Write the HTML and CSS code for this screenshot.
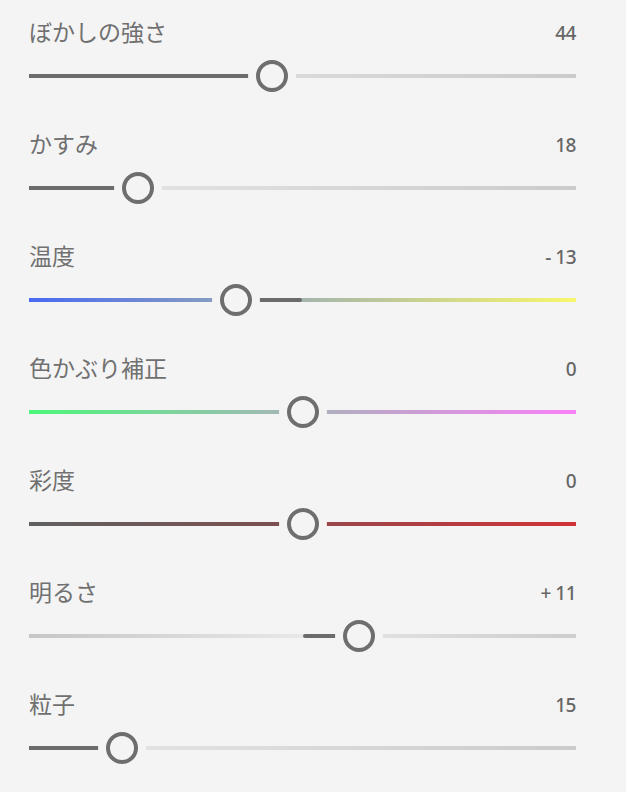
FILE: index.html
```html
<!DOCTYPE html>
<html lang="ja">

<head>
  <meta charset="utf-8">
  <title>調整</title>
  <link rel="stylesheet" href="styles.css">
</head>

<body class="main">
  <div class="panel">
    <div class="row">
      <div class="head"><span class="label">ぼかしの強さ</span><span class="value">44</span></div>
      <div class="slider plain" style="--pos:0.44">
        <div class="track"></div>
        <div class="fill"></div>
        <div class="thumb"></div>
      </div>
    </div>

    <div class="row">
      <div class="head"><span class="label">かすみ</span><span class="value">18</span></div>
      <div class="slider plain" style="--pos:0.18">
        <div class="track"></div>
        <div class="fill"></div>
        <div class="thumb"></div>
      </div>
    </div>

    <div class="row">
      <div class="head"><span class="label">温度</span><span class="value">- 13</span></div>
      <div class="slider center temp" style="--pos:0.37">
        <div class="track"></div>
        <div class="fill"></div>
        <div class="thumb"></div>
      </div>
    </div>

    <div class="row">
      <div class="head"><span class="label">色かぶり補正</span><span class="value">0</span></div>
      <div class="slider center tint" style="--pos:0.5">
        <div class="track"></div>
        <div class="fill"></div>
        <div class="thumb"></div>
      </div>
    </div>

    <div class="row">
      <div class="head"><span class="label">彩度</span><span class="value">0</span></div>
      <div class="slider center sat" style="--pos:0.5">
        <div class="track"></div>
        <div class="fill"></div>
        <div class="thumb"></div>
      </div>
    </div>

    <div class="row">
      <div class="head"><span class="label">明るさ</span><span class="value">+ 11</span></div>
      <div class="slider center bright" style="--pos:0.61">
        <div class="track"></div>
        <div class="fill"></div>
        <div class="thumb"></div>
      </div>
    </div>

    <div class="row">
      <div class="head"><span class="label">粒子</span><span class="value">15</span></div>
      <div class="slider plain" style="--pos:0.15">
        <div class="track"></div>
        <div class="fill"></div>
        <div class="thumb"></div>
      </div>
    </div>
  </div>
</body>

</html>
```

FILE: styles.css
```css
body {
  margin: 0;
}

.main {
  background: #f4f4f4;
  font-family: "Noto Sans CJK JP", "Noto Sans", sans-serif;
  color: #707070;
}

.panel {
  padding: 17px 50px 0 29px;
}

.row {
  margin-bottom: 37px;
}

.head {
  display: flex;
  justify-content: space-between;
  align-items: center;
  height: 32px;
  margin-bottom: 11px;
}

.label {
  font-size: 23px;
  line-height: 32px;
  margin-top: -4px;
}

.value {
  font-family: "Noto Sans", sans-serif;
  font-size: 19px;
  font-weight: 500;
  letter-spacing: -0.5px;
  color: #666666;
  line-height: 32px;
  margin-top: -1px;
}

/* slider */
.slider {
  --c: calc(16px + var(--pos) * (100% - 32px));
  position: relative;
  display: flex;
  align-items: center;
  height: 32px;
}

.track {
  width: 100%;
  height: 4px;
}

.fill {
  position: absolute;
  top: 14px;
  height: 4px;
  background: #6b6b6b;
  border-radius: 2px;
}

.thumb {
  position: absolute;
  top: 0;
  left: calc(var(--c) - 16px);
  width: 32px;
  height: 32px;
  box-sizing: border-box;
  border: 4px solid #6e6e6e;
  border-radius: 50%;
  background: #f4f4f4;
  box-shadow: 0 0 0 8px #f4f4f4;
}

.plain .track {
  background: linear-gradient(to right, #e8e8e8, #cbcbcb);
}

.plain .fill {
  left: 0;
  width: var(--c);
  border-radius: 0 2px 2px 0;
}

.center .fill {
  left: min(50%, var(--c));
  width: max(calc(50% - var(--c)), calc(var(--c) - 50%));
}

.temp .track {
  background: linear-gradient(to right, #4869f2, #a4b5ac 50%, #f8f66a);
}

.tint .track {
  background: linear-gradient(to right, #4cf77a, #a9b3ba 50%, #f97ff7);
}

.sat .track {
  background: linear-gradient(to right, #606060, #7c4f4f 46%, #9a474c 54%, #d03236);
}

.bright .track {
  background: linear-gradient(to right, #c6c6c6, #e8e8e8 50%, #cdcdcd);
}
```
